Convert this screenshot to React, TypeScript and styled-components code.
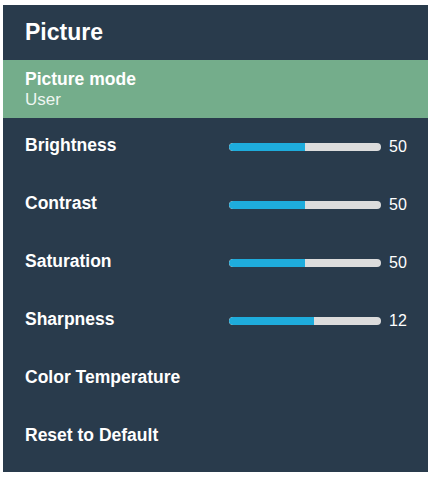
import React from "react";
import styled, { createGlobalStyle } from "styled-components";

const GlobalStyle = createGlobalStyle`
  html, body {
    margin: 0;
    padding: 0;
    background: #ffffff;
  }
  body {
    font-family: "Liberation Sans", Arial, sans-serif;
  }
`;

type Setting = {
  label: string;
  value?: number;
  fill?: number;
};

const settings: Setting[] = [
  { label: "Brightness", value: 50, fill: 50 },
  { label: "Contrast", value: 50, fill: 50 },
  { label: "Saturation", value: 50, fill: 50 },
  { label: "Sharpness", value: 12, fill: 55.6 },
  { label: "Color Temperature" },
  { label: "Reset to Default" },
];

const App: React.FC = () => {
  return (
    <>
      <GlobalStyle />
      <Panel>
        <Title>Picture</Title>
        <ModeRow>
          <ModeLabel>Picture mode</ModeLabel>
          <ModeValue>User</ModeValue>
        </ModeRow>
        {settings.map((s) => (
          <Row key={s.label}>
            <Label>{s.label}</Label>
            {s.value !== undefined && (
              <>
                <Track>
                  <Fill style={{ width: `${s.fill}%` }} />
                </Track>
                <Value>{s.value}</Value>
              </>
            )}
          </Row>
        ))}
      </Panel>
    </>
  );
};

const Panel = styled.div`
  margin: 5px 4px 5px 3px;
  width: 425px;
  height: 467px;
  background: #293b4c;
  color: #ffffff;
  display: flex;
  flex-direction: column;
`;

const Title = styled.div`
  height: 55px;
  display: flex;
  align-items: center;
  padding-left: 22px;
  font-size: 23px;
  font-weight: bold;
`;

const ModeRow = styled.div`
  height: 58px;
  background: #74ad8b;
  padding-left: 22px;
  display: flex;
  flex-direction: column;
  justify-content: center;
`;

const ModeLabel = styled.div`
  font-size: 17.5px;
  font-weight: bold;
  line-height: 20px;
`;

const ModeValue = styled.div`
  font-size: 17px;
  line-height: 21px;
  color: #eef6f1;
`;

const Row = styled.div`
  height: 58px;
  display: flex;
  align-items: center;
  padding: 0 8px 0 22px;
`;

const Label = styled.div`
  flex: 1;
  font-size: 17.5px;
  font-weight: bold;
  margin-top: -3px;
`;

const Track = styled.div`
  width: 152px;
  height: 8px;
  border-radius: 4px;
  background: #dcdcdc;
  overflow: hidden;
`;

const Fill = styled.div`
  height: 100%;
  background: #1eacdc;
  border-radius: 4px 0 0 4px;
`;

const Value = styled.div`
  width: 31px;
  margin-left: 8px;
  font-size: 16px;
  margin-top: -1px;
`;

export default App;
